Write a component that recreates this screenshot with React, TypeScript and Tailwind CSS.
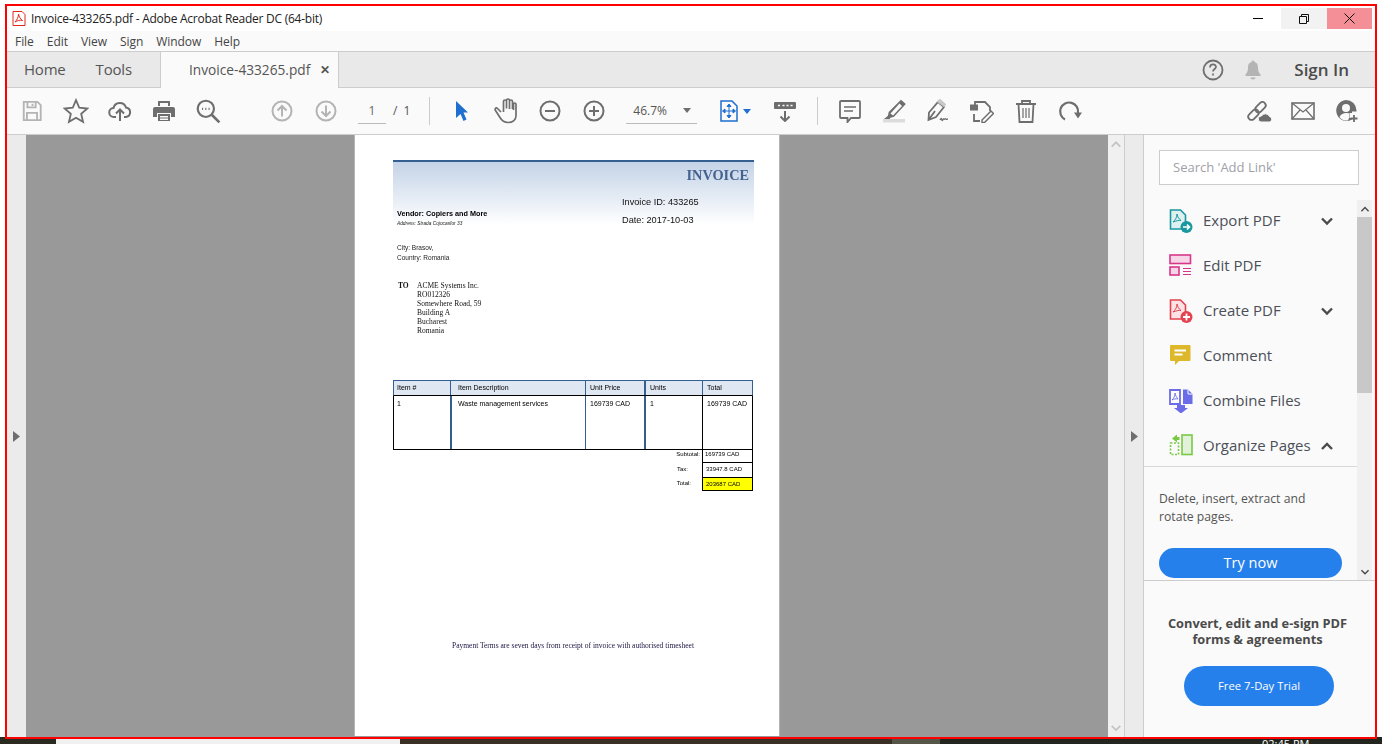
import { ReactNode } from 'react';

const GREY = '#6e6e6e';
const LIGHT = '#b4b4b4';

function Slot({ children, w = 'w-11' }: { children: ReactNode; w?: string }) {
  return <div className={`${w} h-full shrink-0 flex items-center justify-center`}>{children}</div>;
}

function ToolIcon({ name }: { name: string }) {
  if (name === 'export' || name === 'create') {
    const c = name === 'export' ? '#1b97a0' : '#e2434f';
    const fill = name === 'export' ? '#dff0f0' : '#fbe3e5';
    return (
      <svg width={24} height={24} viewBox="0 0 24 24" fill="none">
        <path d="M1.500 1h10l5 5v14h-15z" fill={fill} stroke={c} strokeWidth={1.6} />
        <path d="M8 5c0 3-1.500 6-4 8 3-1 6-2 8-1.500-2-1.500-3.500-3.500-4-6.500z" stroke={c} strokeWidth={1} />
        <circle cx="17.500" cy="18" r="6" fill={c} />
        {name === 'export' ? (
          <path d="M14 18h6.500M18 15.500l2.500 2.500-2.500 2.500" stroke="#fff" strokeWidth={1.6} />
        ) : (
          <path d="M14 18h7M17.500 14.500v7" stroke="#fff" strokeWidth={1.8} />
        )}
      </svg>
    );
  }
  if (name === 'edit') {
    return (
      <svg width={24} height={24} viewBox="0 0 24 24" fill="none" stroke="#d9368b" strokeWidth={1.6}>
        <rect x="1" y="1" width="20.500" height="8.500" fill="#f6d5e6" />
        <rect x="1" y="13" width="9" height="8" fill="#f6d5e6" />
        <path d="M14 14.500h8M14 17.500h8M14 20.500h8" strokeWidth={1.2} />
      </svg>
    );
  }
  if (name === 'comment') {
    return (
      <svg width={24} height={24} viewBox="0 0 24 24" fill="none">
        <path d="M2 1h18.500a1 1 0 0 1 1 1v14a1 1 0 0 1-1 1H10l-4 4v-4H2a1 1 0 0 1-1-1V2a1 1 0 0 1 1-1z" fill="#dcb82a" />
        <path d="M5.500 6.500h11.500M5.500 10.500h8" stroke="#fff" strokeWidth={1.8} />
      </svg>
    );
  }
  if (name === 'combine') {
    return (
      <svg width={24} height={24} viewBox="0 0 24 24" fill="none">
        <path d="M1 1h10v14H1z" fill="#fff" stroke="#6a6ce8" strokeWidth={1.8} />
        <path d="M6 4c0 3-1 5-3 7 2-1 4-1.500 6-1-1.500-1.500-2.500-3.500-3-6z" stroke="#6a6ce8" strokeWidth={0.9} />
        <path d="M14 0.500h5l4.500 4.500v10H14z" fill="#6a6ce8" />
        <path d="M19 0.500v4.500h4.500" stroke="#fff" strokeWidth={1} />
        <path d="M8 16h8v3h3l-7 5.500-7-5.500h3z" fill="#6a6ce8" />
      </svg>
    );
  }
  return (
    <svg width={24} height={24} viewBox="0 0 24 24" fill="none" stroke="#7ac943" strokeWidth={1.6}>
      <rect x="13" y="1" width="10" height="19.500" fill="#e2f1da" />
      <path d="M1.500 9h8v11.500h-8z" strokeDasharray="2 1.500" />
      <path d="M3 4.500l5-4v2.500h2.500v3H8v2.500z" fill="#7ac943" stroke="none" />
    </svg>
  );
}

function Chevron({ up = false, color = '#4b4b4b', size = 14, sw = 2.4 }: { up?: boolean; color?: string; size?: number; sw?: number }) {
  return (
    <svg width={size} height={size} viewBox="0 0 14 14" fill="none" stroke={color} strokeWidth={sw}>
      <path d={up ? 'M2 10l5-5 5 5' : 'M2 4.500l5 5 5-5'} />
    </svg>
  );
}

function ToolRow({ icon, label, chevron }: { icon: string; label: string; chevron?: 'up' | 'down' }) {
  return (
    <div className="h-[45px] flex items-center pl-[25px] pr-[23px] text-[15px] text-[#4b5058]">
      <div className="w-[24px] mr-[10px] flex justify-center">
        <ToolIcon name={icon} />
      </div>
      <span className="flex-1 whitespace-nowrap">{label}</span>
      {chevron && <Chevron up={chevron === 'up'} />}
    </div>
  );
}

function Invoice() {
  const cols = 'grid grid-cols-[56px_135px_59px_58px_50px]';
  return (
    <div className="w-[426px] shrink-0 h-full bg-white pt-[25px] pl-[38px] border-x border-[#b5b5b5] font-['Liberation_Sans',sans-serif] blur-[0.25px]">
      <div className="w-[361px] h-[65px] border-t-2 border-[#365f91] bg-gradient-to-b from-[#c4d3e7] to-white flex justify-between">
        <div className="pl-[4px] pt-[47px]">
          <div className="text-[7.250px] leading-[9px] font-bold text-black whitespace-nowrap">Vendor: Copiers and More</div>
          <div className="text-[4.800px] leading-[11px] italic text-[#222] whitespace-nowrap">Address: Strada Cojocarilor 33</div>
        </div>
        <div className="w-[132px] flex flex-col">
          <div className="text-right pr-[5px] pt-[5px] text-[14.300px] leading-[16px] font-bold text-[#44628f] font-['Liberation_Serif',serif]">INVOICE</div>
          <div className="text-[9.200px] leading-[18px] text-[#111] mt-[10px] whitespace-nowrap">Invoice ID: 433265</div>
          <div className="text-[9.200px] leading-[18px] text-[#111] whitespace-nowrap">Date: 2017-10-03</div>
        </div>
      </div>
      <div className="pl-[4px] pt-[18px] text-[6.500px] leading-[10px] text-[#222]">
        <div>City: Brasov,</div>
        <div>Country: Romania</div>
      </div>
      <div className="flex pl-[5px] pt-[18px] font-['Liberation_Serif',serif] text-[7.500px] leading-[9px] text-[#111]">
        <div className="w-[19px] font-bold">TO</div>
        <div>
          <div>ACME Systems Inc.</div>
          <div>RO012326</div>
          <div>Somewhere Road, 59</div>
          <div>Building A</div>
          <div>Bucharest</div>
          <div>Romania</div>
        </div>
      </div>
      <div className="w-[360px] mt-[45px] text-[7px] text-black">
        <div className={`${cols} h-[16px] bg-[#dfe7f2] border border-[#365f91] border-b-black leading-[13px]`}>
          <div className="pl-[3px]">Item #</div>
          <div className="pl-[7px] border-l border-[#365f91]">Item Description</div>
          <div className="pl-[4px] border-l border-[#365f91]">Unit Price</div>
          <div className="pl-[4px] border-l-2 border-[#365f91]">Units</div>
          <div className="pl-[4px] border-l border-[#365f91]">Total</div>
        </div>
        <div className={`${cols} h-[54px] border-x border-b border-black leading-[15px]`}>
          <div className="pl-[3px]">1</div>
          <div className="pl-[6px] border-l-2 border-[#365f91]">Waste management services</div>
          <div className="pl-[4px] border-l border-[#365f91]">169739 CAD</div>
          <div className="pl-[4px] border-l-2 border-[#365f91]">1</div>
          <div className="pl-[4px] border-l border-black">169739 CAD</div>
        </div>
        <div className="text-[6px]">
          <div className="flex h-[13px] leading-[9px]">
            <div className="w-[309px] text-right pr-[2px]">Subtotal:</div>
            <div className="w-[51px] pl-[2px] border-x border-b border-black">169739 CAD</div>
          </div>
          <div className="flex h-[14px] leading-[13px]">
            <div className="w-[309px] text-right pr-[14px]">Tax:</div>
            <div className="w-[51px] pl-[3px] border-x border-black">33947.8 CAD</div>
          </div>
          <div className="flex h-[14px] leading-[12px]">
            <div className="w-[309px] text-right pr-[11px]">Total:</div>
            <div className="w-[51px] pl-[3px] bg-[#ffff00] border border-black">203687 CAD</div>
          </div>
        </div>
      </div>
      <div className="w-[360px] mt-[150px] text-center font-['Liberation_Serif',serif] text-[7.500px] leading-[9px] text-[#1a1440] whitespace-nowrap">
        Payment Terms are seven days from receipt of invoice with authorised timesheet
      </div>
    </div>
  );
}

export default function App() {
  return (
    <div className="relative w-[1382px] h-[744px] overflow-hidden bg-white flex flex-col font-['Open_Sans',sans-serif]">
      <div className="flex-1 min-h-0 flex flex-col mt-[6px] ml-[7px] w-[1368px]">
        {/* title bar */}
        <div className="h-[25px] bg-white flex items-center shrink-0">
          <svg width={14} height={15} viewBox="0 0 14 15" fill="none" className="ml-[5px] mr-[5px]">
            <path d="M1 .5h9l3 3v11H1z" fill="#fff" stroke="#e0281c" />
            <path d="M6.500 3c0 3-1.500 6-3.500 8 2-1 5-2.500 7.500-1.500C8.500 8 7 6 6.500 3z" stroke="#e0281c" />
          </svg>
          <span className="text-[12px] text-[#222] whitespace-nowrap tracking-[-0.25px] pt-[1px]">Invoice-433265.pdf - Adobe Acrobat Reader DC (64-bit)</span>
          <div className="ml-auto flex h-[21px] self-start mt-[2px] mr-[3px]">
            <div className="w-[46px] flex items-center justify-center">
              <div className="w-[10px] h-px bg-black" />
            </div>
            <div className="w-[46px] bg-[#f2f2f2] flex items-center justify-center">
              <svg width={10} height={10} viewBox="0 0 10 10" fill="none" stroke="#111">
                <path d="M.5 2.500h7v7h-7zM2.500 2.500v-2h7v7h-2" />
              </svg>
            </div>
            <div className="w-[45px] bg-[#f48f98] flex items-center justify-center">
              <svg width={11} height={11} viewBox="0 0 11 11" fill="none" stroke="#111">
                <path d="M.5.500l10 10M10.500.500l-10 10" />
              </svg>
            </div>
          </div>
        </div>
        {/* menu */}
        <div className="h-[20px] bg-[#fafafa] flex items-center pl-[8px] pt-[1px] gap-[13px] text-[12px] text-[#444] shrink-0 tracking-[-0.05px]">
          <span>File</span>
          <span>Edit</span>
          <span>View</span>
          <span>Sign</span>
          <span>Window</span>
          <span>Help</span>
        </div>
        {/* tabs */}
        <div className="h-[37px] bg-[#e9e9e9] border-y border-[#cdcdcd] flex items-stretch shrink-0 text-[15px] text-[#555]">
          <div className="w-[153px] flex items-center pl-[17px] gap-[30px] tracking-[-0.2px]">
            <span>Home</span>
            <span>Tools</span>
          </div>
          <div className="w-[179px] bg-[#fafafa] border-x border-[#cdcdcd] flex items-center pl-[28px] -mb-px text-[13.700px] whitespace-nowrap">
            <span>Invoice-433265.pdf</span>
            <span className="ml-[10px] text-[#555] font-bold text-[12px]">✕</span>
          </div>
          <div className="ml-auto flex items-center pr-[26px]">
            <svg width={24} height={24} viewBox="0 0 24 24" fill="none" stroke={GREY} strokeWidth={1.8} className="mr-[17px]">
              <circle cx="12" cy="12" r="9.500" />
              <path d="M9 9.500c0-4 6-4 6-.5 0 2-3 2-3 4.500M12 15.500v2" strokeWidth={1.7} />
            </svg>
            <svg width={22} height={22} viewBox="0 0 22 22" fill="#b4b4b4" className="mr-[30px]">
              <path d="M11 1.500a1.500 1.500 0 0 1 1.500 1.500c3 .8 3.500 3.500 3.500 6 0 3 1 5 2.500 6.500V17h-15v-1.500C5 14 6 12 6 9c0-2.500.5-5.200 3.500-6A1.500 1.500 0 0 1 11 1.500z" />
              <path d="M8.500 18.500h5a2.500 2 0 0 1-5 0z" />
            </svg>
            <span className="font-semibold text-[#4b4b4b] text-[17px]">Sign In</span>
          </div>
        </div>
        {/* toolbar */}
        <div className="h-[47px] bg-[#fafafa] border-b border-[#cdcdcd] flex items-center pl-[3px] shrink-0 text-[12px] text-[#555]">
          <Slot>
            <svg width={22} height={22} viewBox="0 0 24 24" fill="none" stroke={LIGHT} strokeWidth={2}>
              <path d="M3 2h15l3.500 3.500V22H3z" />
              <path d="M7 2v6h9V2M12.500 4v2.500M6.500 22v-8h11v8" />
            </svg>
          </Slot>
          <Slot>
            <svg width={26} height={26} viewBox="0 0 24 24" fill="none" stroke={GREY} strokeWidth={1.700}>
              <path d="M12 2l3 7 7.500.7-5.700 5 1.700 7.300L12 18.200 5.500 22l1.700-7.300-5.700-5L9 9z" />
            </svg>
          </Slot>
          <Slot>
            <svg width={24} height={24} viewBox="0 0 24 24" fill="none" stroke={GREY} strokeWidth={2}>
              <path d="M8 18H6a4.500 4.500 0 0 1-.5-9 6.500 6.500 0 0 1 12.500-.5 4.800 4.800 0 0 1 0 9.500h-2" />
              <path d="M12 22V11M8 14.500l4-4 4 4" />
            </svg>
          </Slot>
          <Slot>
            <svg width={24} height={24} viewBox="0 0 24 24" fill={GREY}>
              <path d="M6 2h12v5h-2V4H8v3H6z" />
              <path d="M3 8h18a2 2 0 0 1 2 2v8h-4v-4H5v4H1v-8a2 2 0 0 1 2-2z" />
              <path d="M6 15h12v7H6zM8 17v1.500h8V17zM8 19.500V21h8v-1.500z" fillRule="evenodd" />
            </svg>
          </Slot>
          <Slot>
            <svg width={26} height={26} viewBox="0 0 24 24" fill="none" stroke={GREY} strokeWidth={2}>
              <circle cx="10" cy="10" r="7.500" />
              <path d="M15.500 15.500l7 7" strokeWidth={2.4} />
              <path d="M6.500 10h1M9.500 10h1M12.500 10h1" />
            </svg>
          </Slot>
          <div className="w-[30px] shrink-0" />
          <Slot>
            <svg width={22} height={22} viewBox="0 0 22 22" fill="none" stroke={LIGHT} strokeWidth={2}>
              <circle cx="11" cy="11" r="9.500" />
              <path d="M11 16.500V6M6.500 10.500L11 6l4.500 4.500" />
            </svg>
          </Slot>
          <Slot>
            <svg width={22} height={22} viewBox="0 0 22 22" fill="none" stroke={LIGHT} strokeWidth={2}>
              <circle cx="11" cy="11" r="9.500" />
              <path d="M11 5.500V16M6.500 11.500L11 16l4.500-4.500" />
            </svg>
          </Slot>
          <div className="w-[28px] h-[26px] ml-[10px] border-b border-[#bbb] text-center leading-[26px] text-[#666] shrink-0">1</div>
          <span className="ml-[7px] text-[#555]">/</span>
          <span className="ml-[6px] text-[#555]">1</span>
          <div className="w-px h-[28px] bg-[#ccc] ml-[19px] shrink-0" />
          <div className="w-[10px] shrink-0" />
          <Slot>
            <svg width={14} height={22} viewBox="0 0 14 22" fill="#1f6fd0">
              <path d="M1 1l12 11.500H8.500l3 7-3 1.500-3-7L1 18z" />
            </svg>
          </Slot>
          <Slot>
            <svg width={24} height={26} viewBox="0 0 24 26" fill="none" stroke={GREY} strokeWidth={1.700}>
              <path d="M7 14l-3.500-3.500c-1.500-1.500-3 .5-2 2l4.500 7c2 3.500 4 5 8 5 5 0 8-3 8-7V6.500c0-2-2.500-2-2.500 0V12M18.500 11V3.500c0-2-3-2-3 0V11M15.500 10.500V2.500c0-2-3-2-3 0v8M12.500 10.500V3.500c0-2-3-2-3 0V14" />
            </svg>
          </Slot>
          <Slot>
            <svg width={22} height={22} viewBox="0 0 22 22" fill="none" stroke={GREY} strokeWidth={2}>
              <circle cx="11" cy="11" r="9.500" />
              <path d="M6 11h10" />
            </svg>
          </Slot>
          <Slot>
            <svg width={22} height={22} viewBox="0 0 22 22" fill="none" stroke={GREY} strokeWidth={2}>
              <circle cx="11" cy="11" r="9.500" />
              <path d="M6 11h10M11 6v10" />
            </svg>
          </Slot>
          <div className="w-[71px] h-[26px] ml-[10px] border-b border-[#bbb] flex items-center pl-[7px] pr-[6px] justify-between shrink-0">
            <span className="text-[#555]">46.7%</span>
            <svg width={8} height={5} viewBox="0 0 8 5" fill={GREY}><path d="M0 0h8L4 5z" /></svg>
          </div>
          <div className="w-[23px] shrink-0" />
          <svg width={18} height={22} viewBox="0 0 18 22" fill="none" stroke="#1f6fd0" strokeWidth={1.500} className="shrink-0">
            <path d="M1 1h11l5 5v15H1z" />
            <path d="M3.500 11h11M9 5.500v11M9 4l-2 2.500h4zM9 18l-2-2.500h4zM2.500 11l2.500-2v4zM15.500 11l-2.500-2v4z" strokeWidth={1} fill="#1f6fd0" />
          </svg>
          <svg width={8} height={5} viewBox="0 0 8 5" fill="#1f6fd0" className="ml-[5px] shrink-0"><path d="M0 0h8L4 5z" /></svg>
          <div className="w-[23px] shrink-0" />
          <svg width={22} height={21} viewBox="0 0 22 21" fill="none" stroke={GREY} strokeWidth={2} className="shrink-0">
            <rect x="0" y="1" width="22" height="7" rx="1" fill={GREY} stroke="none" />
            <path d="M4 4.500h2M8.500 4.500h2M12.500 4.500h2M16.500 4.500h2" stroke="#fff" strokeWidth={1.500} />
            <path d="M11 10v10M6.500 15.500l4.500 4.500 4.500-4.500" />
          </svg>
          <div className="w-px h-[28px] bg-[#ccc] ml-[21px] shrink-0" />
          <div className="w-[10px] shrink-0" />
          <Slot>
            <svg width={22} height={24} viewBox="0 0 22 24" fill="none" stroke={GREY} strokeWidth={1.800}>
              <path d="M2 2h18a1 1 0 0 1 1 1v15a1 1 0 0 1-1 1h-8l-3.500 4v-4H2a1 1 0 0 1-1-1V3a1 1 0 0 1 1-1z" />
              <path d="M5 8h12M5 12h9" strokeWidth={1.300} />
            </svg>
          </Slot>
          <Slot>
            <svg width={24} height={24} viewBox="0 0 24 24" fill="none">
              <path d="M1 20h22v3.500H1z" fill="#dcdcdc" />
              <path d="M19 2l3.500 3-11 12-5 1.500 1-5z" fill={GREY} stroke={GREY} strokeWidth={1.800} />
              <path d="M17.500 4.500l2.500 2.500-9 9.500-2.500-2z" fill="#fafafa" />
              <path d="M7 16l-5 4h6z" fill={GREY} />
            </svg>
          </Slot>
          <Slot>
            <svg width={24} height={24} viewBox="0 0 24 24" fill="none" stroke={GREY} strokeWidth={1.800}>
              <path d="M12 3l6 5-8 10-7.500 3 .5-7.500zM2.500 21L9 12" />
              <path d="M12 2.500l2-1.500 5 4.500-1 1.500z" fill="#c8c8c8" stroke="#c8c8c8" />
              <path d="M14 21c1-2 1.500-2 2 0s1-2 2-1 1-1 2 0 1 0 2 0" strokeWidth={1.300} />
            </svg>
          </Slot>
          <Slot>
            <svg width={24} height={24} viewBox="0 0 24 24" fill="none" stroke={GREY} strokeWidth={1.800}>
              <path d="M5 6V3h10l5 5v4M4 15v7h6" />
              <path d="M0 5.500h8v6H0z" fill={GREY} stroke="none" />
              <path d="M21 12l2.500 2.500-9 9H12v-2.500z" strokeWidth={1.500} />
            </svg>
          </Slot>
          <Slot>
            <svg width={22} height={24} viewBox="0 0 22 24" fill="none" stroke={GREY} strokeWidth={1.800}>
              <path d="M1 5h20M7 5V2h8v3M3.500 5l1 18h13l1-18" />
              <path d="M8 9v10M11 9v10M14 9v10" strokeWidth={1.200} />
            </svg>
          </Slot>
          <Slot>
            <svg width={24} height={24} viewBox="0 0 24 24" fill="none" stroke={GREY} strokeWidth={2.200}>
              <path d="M7 20.500A9 9 0 1 1 20 14" />
              <path d="M16 13.500h8l-4 6z" fill={GREY} stroke="none" />
            </svg>
          </Slot>
          <div className="ml-auto flex items-center pr-[6px]">
            <Slot>
              <svg width={25} height={24} viewBox="0 0 25 24" fill="none" stroke={GREY} strokeWidth={1.800}>
                <rect x="0.500" y="12.500" width="12" height="6.500" rx="3.200" transform="rotate(-45 6.500 15.750)" />
                <rect x="7.500" y="5" width="12" height="6.500" rx="3.200" transform="rotate(-45 13.500 8.250)" />
                <path d="M14 23a3 3 0 0 1 .5-6 4.500 4.500 0 0 1 8 .5 2.800 2.800 0 0 1 0 5.500z" fill={GREY} stroke="#fafafa" strokeWidth={1} />
              </svg>
            </Slot>
            <Slot>
              <svg width={24} height={18} viewBox="0 0 24 18" fill="none" stroke={GREY} strokeWidth={1.600}>
                <rect x="1" y="1" width="22" height="16" />
                <path d="M1 1l11 9 11-9M1 17l8-9M23 17l-8-9" strokeWidth={1.200} />
              </svg>
            </Slot>
            <Slot>
              <svg width={24} height={24} viewBox="0 0 24 24" fill={GREY}>
                <path d="M11 1a10.500 10.500 0 0 1 10.500 10.500v1H17V14h-2.500v5H19l-.5.500A10.500 10.500 0 1 1 11 1z" fillRule="evenodd" />
                <circle cx="11" cy="9" r="4" fill="#fafafa" />
                <path d="M4.500 18c1.500-3 4-4 6.500-4s3 .5 3 .5V19l-1 2.500c-3 .5-6.500-.500-8.500-3.500z" fill="#fafafa" />
                <path d="M19 16v7M15.500 19.500h7" stroke={GREY} strokeWidth={1.800} />
              </svg>
            </Slot>
          </div>
        </div>
        {/* main */}
        <div className="flex-1 min-h-0 flex">
          <div className="w-[19px] shrink-0 bg-[#ebebeb] flex items-center justify-center">
            <svg width={7} height={11} viewBox="0 0 7 11" fill="#6e6e6e"><path d="M0 0l7 5.500L0 11z" /></svg>
          </div>
          <div className="flex-1 min-w-0 bg-[#999999] flex justify-center h-full pb-[1px]">
            <Invoice />
          </div>
          <div className="w-[17px] shrink-0 bg-[#f0f0f0] border-r border-[#cdcdcd] flex flex-col items-center justify-between py-[3px]">
            <Chevron up color="#c4c4c4" size={12} sw={2} />
            <Chevron color="#c4c4c4" size={12} sw={2} />
          </div>
          <div className="w-[18px] shrink-0 bg-[#ebebeb] flex items-center justify-center">
            <svg width={7} height={11} viewBox="0 0 7 11" fill="#6e6e6e"><path d="M0 0l7 5.500L0 11z" /></svg>
          </div>
          <div className="w-[232px] shrink-0 bg-[#fafafa] border-l border-[#cdcdcd] flex flex-col">
            <div className="pt-[15px] pl-[15px] shrink-0">
              <div className="w-[200px] h-[35px] border border-[#cdcdcd] bg-white flex items-center pl-[13px] text-[13px] text-[#a0a0a8]">
                Search 'Add Link'
              </div>
            </div>
            <div className="h-[383px] mt-[13px] flex shrink-0 border-b border-[#cdcdcd]">
              <div className="w-[213px] shrink-0">
                <div className="-mb-[2px]">
                  <ToolRow icon="export" label="Export PDF" chevron="down" />
                  <ToolRow icon="edit" label="Edit PDF" />
                  <ToolRow icon="create" label="Create PDF" chevron="down" />
                  <ToolRow icon="comment" label="Comment" />
                  <ToolRow icon="combine" label="Combine Files" />
                  <ToolRow icon="organize" label="Organize Pages" chevron="up" />
                </div>
                <div className="relative border-t border-[#d8d8d8] pt-[23px] pl-[15px] text-[12.200px] leading-[17.500px] text-[#555]">
                  <div>Delete, insert, extract and</div>
                  <div>rotate pages.</div>
                </div>
                <div className="ml-[15px] mt-[23px] w-[183px] h-[30px] rounded-full bg-[#2680eb] flex items-center justify-center text-[14.500px] text-white">
                  Try now
                </div>
              </div>
              <div className="w-[15px] shrink-0 mt-[2px] bg-[#f0f0f0] flex flex-col items-center">
                <div className="h-[17px] flex items-center">
                  <Chevron up size={10} sw={2} />
                </div>
                <div className="w-full h-[176px] bg-[#c8c8c8]" />
                <div className="mt-auto h-[17px] flex items-center">
                  <Chevron size={10} sw={2} />
                </div>
              </div>
            </div>
            <div className="flex-1 flex flex-col items-center pt-[34px] pr-[4px]">
              <div className="text-[12.800px] leading-[16px] font-bold text-[#4b4b4b] text-center whitespace-nowrap">
                <div>Convert, edit and e-sign PDF</div>
                <div>forms &amp; agreements</div>
              </div>
              <div className="mt-[19px] ml-[3px] w-[150px] h-[40px] rounded-full bg-[#2680eb] flex items-center justify-center text-[11.300px] text-white">
                Free 7-Day Trial
              </div>
            </div>
          </div>
        </div>
      </div>
      {/* taskbar strip */}
      <div className="h-[7px] shrink-0 flex text-[11px] leading-[14px] text-white">
        <div className="w-[56px] bg-[#2b2a20]" />
        <div className="w-[344px] bg-[#f0f0f0]" />
        <div className="w-[492px] bg-[#3a2f25]" />
        <div className="w-[48px] bg-[#555548]" />
        <div className="flex-1 bg-[#22261e] pl-[322px] whitespace-nowrap overflow-hidden">02:45 PM</div>
      </div>
      {/* screenshot highlight frame */}
      <div className="absolute left-[5px] top-[4px] w-[1372px] h-[735px] border-2 border-[#ff0000] pointer-events-none" />
    </div>
  );
}
